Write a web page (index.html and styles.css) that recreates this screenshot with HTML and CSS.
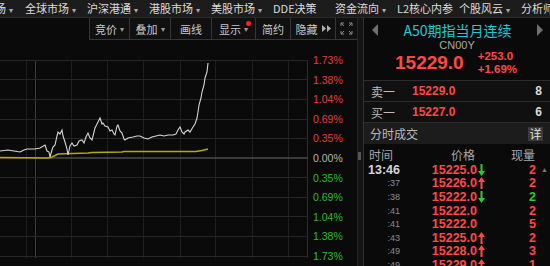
FILE: index.html
```html
<!DOCTYPE html>
<html lang="zh-CN">
<head>
    <meta charset="UTF-8">
    <title>A50期指当月连续</title>
    <link rel="stylesheet" href="styles.css">
</head>
<body>
    <div class="topnav">
        <span class="nav-item first">场 <i>▾</i></span>
        <span class="nav-item">全球市场 <i>▾</i></span>
        <span class="nav-item">沪深港通 <i>▾</i></span>
        <span class="nav-item">港股市场 <i>▾</i></span>
        <span class="nav-item">美股市场 <i>▾</i></span>
        <span class="nav-item">DDE决策</span>
        <span class="nav-item">资金流向 <i>▾</i></span>
        <span class="nav-item">L2核心内参</span>
        <span class="nav-item">个股风云 <i>▾</i></span>
        <span class="nav-item">分析师推荐</span>
    </div>

    <div class="main">
        <div class="left">
            <div class="toolbar">
                <span class="tool w40">竞价 <i>▾</i></span>
                <span class="tool w41">叠加 <i>▾</i></span>
                <span class="tool w41">画线</span>
                <span class="tool w44">显示 <i>▾</i><b class="dot"></b></span>
                <span class="tool w35">简约</span>
                <span class="tool w45"><span>隐藏</span><svg class="ff" width="9" height="7" viewBox="0 0 9 7"><path fill="#b0b0b0" d="M0 0l4 3.5L0 7zM5 0l4 3.5L5 7z"/></svg></span>
                <span class="tool w21">
                    <svg width="13" height="13" viewBox="0 0 13 13" fill="none" stroke="#8a8a8a" stroke-width="1">
                        <path d="M1 4V1h3M1 1l3 3M9 1h3v3M12 1L9 4M1 9v3h3M1 12l3-3M12 9v3H9M12 12L9 9"/>
                    </svg>
                </span>
            </div>

            <div class="chart">
                <svg class="plot" width="308" height="226" viewBox="0 0 308 226">
                    <g stroke="#1f1f1f" stroke-width="1">
                        <path d="M26.5 20V218M71.5 20V218M107.5 20V218M143.5 20V218M180.5 20V218M215.5 20V218M252.5 20V218M288.5 20V218"/>
                    </g>
                    <path d="M35.5 20V218" stroke="#3c3c3c" stroke-width="1"/>
                    <path d="M307.5 20V218" stroke="#2c2c2c" stroke-width="1"/>
                    <g stroke="#272727" stroke-width="1">
                        <path d="M0 20.5H308M0 39.5H308M0 59.5H308M0 79.5H308M0 98.5H308M0 137.5H308M0 157.5H308M0 176.5H308M0 196.5H308M0 216.5H308"/>
                    </g>
                    <path d="M0 118H308" stroke="#4d4d4d" stroke-width="1.5"/>
                    <polyline fill="none" stroke="#b5ab00" stroke-width="1.6"
                        points="0,117.5 48,118 52,117 58,114 88,113 92,112.5 122,112 124,111.5 196,111.5 202,110.5 208,109"/>
                    <polyline fill="none" stroke="#d6d6d6" stroke-width="1.1"
                        points="0,111 8,110 14,111 20,112 24,110 27,109 33,109 35,109 40,108 45,105 47,111 49,112 50,117 52,110 53,107 55,105 57,96 58,92 60,94 62,90 63,96 65,102 67,109 68,115 70,106 72,103 74,106 77,105 79,101 82,100 84,103 86,97 88,93 90,98 92,100 94,92 95,88 97,84 99,80 100,78 102,84 103,83 105,86 108,87 110,91 112,90 114,94 115,95 117,86 118,85 120,91 122,93 124,99 125,100 128,98 133,97 137,96 140,96 144,98 148,99 152,97 156,96 160,95 164,96 168,95 173,95 176,94 178,90 180,87 182,92 184,94 185,92 188,90 190,92 193,87 195,84 197,78 198,72 199,65 201,58 202,52 204,45 205,38 206,35 207,32 208,23"/>
                </svg>
                <div class="scale">
                    <span class="up">1.73%</span>
                    <span class="up">1.38%</span>
                    <span class="up">1.04%</span>
                    <span class="up">0.69%</span>
                    <span class="up">0.35%</span>
                    <span class="flat">0.00%</span>
                    <span class="down">0.35%</span>
                    <span class="down">0.69%</span>
                    <span class="down">1.04%</span>
                    <span class="down">1.38%</span>
                    <span class="down">1.73%</span>
                </div>
            </div>
        </div>

        <div class="divider"><span class="thumb"></span></div>

        <div class="right">
            <div class="title-bar">
                <span class="arrow left-arrow"></span>
                <span class="title">A50期指当月连续</span>
                <span class="arrow right-arrow"></span>
            </div>
            <div class="code">CN00Y</div>
            <div class="quote">
                <span class="last">15229.0</span>
                <div class="change">
                    <span>+253.0</span>
                    <span>+1.69%</span>
                </div>
            </div>

            <div class="book">
                <div class="book-row">
                    <span class="book-label">卖一</span>
                    <span class="book-price">15229.0</span>
                    <span class="book-qty">8</span>
                </div>
                <div class="book-row">
                    <span class="book-label">买一</span>
                    <span class="book-price">15227.0</span>
                    <span class="book-qty">6</span>
                </div>
            </div>

            <div class="ticks-head">
                <span>分时成交</span>
                <span class="detail">详</span>
            </div>

            <div class="ticks">
                <div class="tick-row header">
                    <span class="t-time">时间</span>
                    <span class="t-price">价格</span>
                    <span class="t-qty">现量</span>
                </div>
                <div class="tick-row">
                    <span class="t-time full">13:46</span>
                    <span class="t-price">15225.0</span>
                    <span class="t-dir"><svg class="dn" width="7" height="12" viewBox="0 0 7 12"><path d="M2.5 0h2v7H7l-3.5 5L0 7h2.5z"/></svg></span>
                    <span class="t-qty red">2</span>
                    <span class="t-scroll">▲</span>
                </div>
                <div class="tick-row">
                    <span class="t-time">:37</span>
                    <span class="t-price">15226.0</span>
                    <span class="t-dir"><svg class="upa" width="7" height="12" viewBox="0 0 7 12"><path d="M3.5 0L7 5H4.5v7h-2V5H0z"/></svg></span>
                    <span class="t-qty red">2</span>
                </div>
                <div class="tick-row">
                    <span class="t-time">:38</span>
                    <span class="t-price">15222.0</span>
                    <span class="t-dir"><svg class="dn" width="7" height="12" viewBox="0 0 7 12"><path d="M2.5 0h2v7H7l-3.5 5L0 7h2.5z"/></svg></span>
                    <span class="t-qty green">2</span>
                </div>
                <div class="tick-row">
                    <span class="t-time">:41</span>
                    <span class="t-price">15222.0</span>
                    <span class="t-dir"></span>
                    <span class="t-qty red">2</span>
                </div>
                <div class="tick-row">
                    <span class="t-time">:41</span>
                    <span class="t-price">15222.0</span>
                    <span class="t-dir"></span>
                    <span class="t-qty red">5</span>
                </div>
                <div class="tick-row">
                    <span class="t-time">:43</span>
                    <span class="t-price">15225.0</span>
                    <span class="t-dir"><svg class="upa" width="7" height="12" viewBox="0 0 7 12"><path d="M3.5 0L7 5H4.5v7h-2V5H0z"/></svg></span>
                    <span class="t-qty red">2</span>
                </div>
                <div class="tick-row">
                    <span class="t-time">:49</span>
                    <span class="t-price">15228.0</span>
                    <span class="t-dir"><svg class="upa" width="7" height="12" viewBox="0 0 7 12"><path d="M3.5 0L7 5H4.5v7h-2V5H0z"/></svg></span>
                    <span class="t-qty red">3</span>
                </div>
                <div class="tick-row">
                    <span class="t-time">:49</span>
                    <span class="t-price">15229.0</span>
                    <span class="t-dir"><svg class="upa" width="7" height="12" viewBox="0 0 7 12"><path d="M3.5 0L7 5H4.5v7h-2V5H0z"/></svg></span>
                    <span class="t-qty red">1</span>
                </div>
            </div>
        </div>
    </div>
</body>
</html>
```

FILE: styles.css
```css
* {
    box-sizing: border-box;
}
body {
    margin: 0;
    width: 550px;
    height: 266px;
    overflow: hidden;
    background: #0a0a0a;
    color: #cfcfcf;
    font-family: "Noto Sans CJK SC", "Liberation Sans", sans-serif;
}
i {
    font-style: normal;
}

/* top navigation */
.topnav {
    display: flex;
    height: 18px;
    background: #1c1c1c;
    border-bottom: 1px solid #2a2a2a;
    white-space: nowrap;
    overflow: hidden;
}
.nav-item {
    flex: none;
    width: 62px;
    font-size: 11px;
    line-height: 17px;
    color: #dcdcdc;
}
.nav-item.first {
    width: 30px;
    margin-left: -5px;
}
.nav-item i {
    font-size: 8px;
    color: #aaa;
    margin-left: 1px;
}

.main {
    display: flex;
    height: 248px;
}

/* left: toolbar + chart */
.left {
    width: 357px;
    flex: none;
    display: flex;
    flex-direction: column;
}
.toolbar {
    display: flex;
    flex: none;
    margin-left: 89px;
    height: 22px;
    border-left: 1px solid #363636;
    border-bottom: 1px solid #363636;
    background: #101010;
}
.tool {
    display: flex;
    flex: none;
    align-items: center;
    justify-content: center;
    position: relative;
    height: 21px;
    border-right: 1px solid #363636;
    font-size: 11px;
    color: #c8c8c8;
    white-space: nowrap;
}
.tool:last-child {
    border-right: none;
}
.tool i {
    font-size: 8px;
    color: #999;
    margin-left: 3px;
}
.tool .ff {
    display: block;
    flex: none;
    margin-left: 4px;
}
.tool .dot {
    position: absolute;
    top: 3px;
    right: 4px;
    width: 5px;
    height: 5px;
    border-radius: 50%;
    background: #ff2020;
}
.w40 { width: 40px; }
.w41 { width: 41px; }
.w44 { width: 44px; }
.w35 { width: 35px; }
.w45 { width: 45px; }
.w21 { width: 21px; }

.chart {
    display: flex;
    flex: none;
    height: 226px;
}
.plot {
    display: block;
    flex: none;
}
.scale {
    display: flex;
    flex-direction: column;
    padding: 11px 0 0 5px;
    font-family: "Liberation Sans", sans-serif;
    font-size: 10.5px;
}
.scale span {
    height: 19.6px;
    line-height: 19.6px;
}
.scale .up { color: #e04040; }
.scale .flat { color: #b4b4b4; }
.scale .down { color: #2dbb2d; }

/* splitter */
.divider {
    position: relative;
    flex: none;
    width: 7px;
    background: #141414;
    border-left: 1px solid #262626;
    border-right: 1px solid #333;
}
.thumb {
    position: absolute;
    left: 0;
    top: 134px;
    width: 3px;
    height: 8px;
    background: #555;
}

/* right panel */
.right {
    width: 186px;
    flex: none;
    display: flex;
    flex-direction: column;
    overflow: hidden;
}
.right > * {
    flex: none;
}
.title-bar {
    display: flex;
    align-items: center;
    justify-content: space-between;
    height: 23px;
    padding: 1px 7px 0 8px;
}
.title {
    font-size: 14px;
    line-height: 18px;
    color: #20c8d2;
}
.arrow {
    width: 0;
    height: 0;
    border-top: 6px solid transparent;
    border-bottom: 6px solid transparent;
}
.left-arrow {
    border-right: 6px solid #707070;
}
.right-arrow {
    border-left: 6px solid #707070;
}
.code {
    text-align: center;
    font-family: "Liberation Sans", sans-serif;
    font-size: 11px;
    line-height: 9px;
    height: 9px;
    color: #a8a8a8;
}
.quote {
    display: flex;
    align-items: center;
    padding: 0 0 5px 31px;
    height: 30px;
    font-family: "Liberation Sans", sans-serif;
    color: #ff4848;
}
.last {
    font-size: 19px;
    font-weight: bold;
    margin-top: 1px;
}
.change {
    display: flex;
    flex-direction: column;
    margin-left: 14px;
    font-size: 11.5px;
    font-weight: bold;
    line-height: 12.5px;
}

.book {
    border-top: 1px solid #2c2c2c;
}
.book-row {
    display: flex;
    align-items: center;
    height: 21px;
    padding: 0 8px 0 7px;
    background: #101010;
    border-bottom: 1px solid #2c2c2c;
}
.book-label {
    width: 41px;
    font-size: 12px;
    color: #bdbdbd;
}
.book-price {
    flex: 1;
    font-family: "Liberation Sans", sans-serif;
    font-size: 12px;
    font-weight: bold;
    color: #ff4848;
}
.book-qty {
    font-family: "Liberation Sans", sans-serif;
    font-size: 12px;
    font-weight: bold;
    color: #dcdcdc;
}

.ticks-head {
    display: flex;
    align-items: center;
    justify-content: space-between;
    height: 21px;
    padding: 0 7px 0 6px;
    background: #1c1c1c;
    font-size: 12px;
    color: #b8b8b8;
}
.detail {
    width: 15px;
    height: 14px;
    line-height: 14px;
    text-align: center;
    background: #3a3a3a;
    color: #e0e0e0;
}

.ticks {
    padding-top: 2px;
    font-family: "Liberation Sans", sans-serif;
}
.tick-row {
    display: flex;
    align-items: center;
    height: 13.6px;
}
.tick-row.header {
    height: 16px;
    margin-bottom: 1px;
    font-family: "Noto Sans CJK SC", sans-serif;
    font-size: 12px;
    color: #a8a8a8;
}
.t-time {
    width: 36px;
    text-align: right;
    font-size: 9px;
    color: #8c8c8c;
}
.t-time.full {
    font-size: 12.5px;
    font-weight: bold;
    color: #d6d6d6;
}
.header .t-time {
    width: 29px;
    text-align: right;
    font-size: 12px;
    color: #a8a8a8;
}
.t-price {
    width: 77px;
    text-align: right;
    font-size: 12.5px;
    font-weight: bold;
    color: #ff4848;
}
.header .t-price {
    width: 82px;
    font-size: 12px;
    font-weight: normal;
    color: #a8a8a8;
}
.t-dir {
    display: flex;
    width: 8px;
    padding-left: 1px;
}
.dn { fill: #2ecb2e; }
.upa { fill: #ff4848; }
.t-qty {
    width: 51px;
    text-align: right;
    font-size: 12.5px;
    font-weight: bold;
}
.header .t-qty {
    width: 60px;
    font-size: 12px;
    font-weight: normal;
}
.t-qty.red { color: #ff4848; }
.t-qty.green { color: #2ecb2e; }
.t-scroll {
    margin-left: 5px;
    font-size: 7px;
    color: #777;
}
```
